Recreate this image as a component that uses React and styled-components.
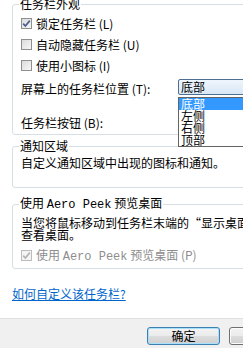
import React from "react";
import styled, { createGlobalStyle } from "styled-components";

const GlobalStyle = createGlobalStyle`
  html, body {
    margin: 0;
    padding: 0;
    overflow: hidden;
    background: #ffffff;
  }
`;

const Dialog = styled.div`
  width: 396px;
  height: 348px;
  display: flex;
  flex-direction: column;
  background: #ffffff;
  font-family: "Noto Sans CJK SC", "Liberation Sans", sans-serif;
  font-size: 12px;
  color: #000000;
`;

const Content = styled.div`
  padding: 0 12px;
  display: flex;
  flex-direction: column;
`;

const Group = styled.fieldset`
  margin: ${(p) => p.$mt}px 0 0;
  padding: ${(p) => p.$pad};
  border: 1px solid #d5dfe5;
  border-radius: 3px;
  min-width: 0;
  display: flex;
  flex-direction: column;
`;

const Legend = styled.legend`
  padding: 0 1px;
  margin-left: -2px;
  line-height: 16px;
  font-size: 12px;
`;

const Mono = styled.span`
  font-family: "Liberation Mono", monospace;
  font-size: 12px;
`;

const CheckRow = styled.div`
  height: ${(p) => p.$h || 21}px;
  margin-top: ${(p) => p.$mt || 0}px;
  display: flex;
  align-items: center;
  gap: 4px;
  white-space: nowrap;
  color: ${(p) => (p.$disabled ? "#8d8d8d" : "#000000")};
`;

const Box = styled.span`
  box-sizing: border-box;
  width: 11px;
  height: 11px;
  border: 1px solid ${(p) => (p.$disabled ? "#bcbcbc" : "#8e8f8f")};
  background: ${(p) =>
    p.$disabled
      ? "linear-gradient(#f4f4f4, #f4f4f4)"
      : "linear-gradient(135deg, #dcdcdc, #f6f6f6)"};
  display: flex;
  align-items: center;
  justify-content: center;
  flex-shrink: 0;
`;

const FieldRow = styled.div`
  height: 22px;
  margin-top: ${(p) => p.$mt}px;
  display: flex;
  align-items: ${(p) => (p.$top ? "flex-start" : "center")};
  white-space: nowrap;
`;

const FieldLabel = styled.span`
  width: 157px;
  line-height: 22px;
`;

const SelectWrap = styled.div`
  position: relative;
  margin-top: 1px;
`;

const Select = styled.div`
  box-sizing: border-box;
  width: 124px;
  height: 16px;
  border: 1px solid #4f6f92;
  border-radius: 2px;
  background: linear-gradient(#eef5fc, #d9e8f6);
  padding-left: 2px;
  line-height: 14px;
`;

const DropList = styled.div`
  position: absolute;
  top: 18px;
  left: 0;
  box-sizing: border-box;
  width: 124px;
  border: 1px solid #646464;
  background: #ffffff;
  z-index: 2;
`;

const DropItem = styled.div`
  height: 12px;
  line-height: 12px;
  padding-left: 2px;
  background: ${(p) => (p.$active ? "#3399ff" : "transparent")};
  color: ${(p) => (p.$active ? "#ffffff" : "#000000")};
`;

const Para = styled.div`
  line-height: ${(p) => p.$lh}px;
  white-space: nowrap;
`;

const Link = styled.a`
  margin-top: 17px;
  align-self: flex-start;
  line-height: 16px;
  color: #0066cc;
  text-decoration: underline;
`;

const Footer = styled.div`
  margin-top: 16px;
  flex: 1;
  border-top: 1px solid #dfdfdf;
  background: #f0f0f0;
  padding: 8px 12px 0;
  display: flex;
  justify-content: flex-end;
  align-items: flex-start;
  gap: 9px;
`;

const Button = styled.button`
  box-sizing: border-box;
  width: 73px;
  height: 18px;
  padding: 0;
  border: 1px solid ${(p) => (p.$primary ? "#3c7fb1" : "#707070")};
  border-radius: 3px;
  background: linear-gradient(#f3f3f3 0%, #ebebeb 50%, #dddddd 51%, #cfcfcf 100%);
  box-shadow: ${(p) => (p.$primary ? "inset 0 0 0 1px #a6e0fb" : "inset 0 0 0 1px #fcfcfc")};
  font-family: inherit;
  font-size: 12px;
  line-height: 16px;
  color: #000000;
`;

const Check = ({ checked, disabled }) => (
  <Box $disabled={disabled}>
    {checked && (
      <svg width="9" height="9" viewBox="0 0 9 9">
        <path
          d="M1.2 4.6 L3.4 7 L7.8 1.6"
          fill="none"
          stroke={disabled ? "#b4b4b4" : "#4b5f8f"}
          strokeWidth="1.7"
        />
      </svg>
    )}
  </Box>
);

const positions = ["底部", "左侧", "右侧", "顶部"];

export default function App() {
  return (
    <>
      <GlobalStyle />
      <Dialog lang="zh-CN">
        <Content>
          <Group $mt={-4} $pad="1px 8px 0">
            <Legend>任务栏外观</Legend>
            <CheckRow>
              <Check checked />
              <span>锁定任务栏 (L)</span>
            </CheckRow>
            <CheckRow>
              <Check />
              <span>自动隐藏任务栏 (U)</span>
            </CheckRow>
            <CheckRow>
              <Check />
              <span>使用小图标 (I)</span>
            </CheckRow>
            <FieldRow $mt={2} $top>
              <FieldLabel>屏幕上的任务栏位置 (T):</FieldLabel>
              <SelectWrap>
                <Select>底部</Select>
                <DropList>
                  {positions.map((p, i) => (
                    <DropItem key={p} $active={i === 0}>
                      {p}
                    </DropItem>
                  ))}
                </DropList>
              </SelectWrap>
            </FieldRow>
            <FieldRow $mt={12}>
              <FieldLabel>任务栏按钮 (B):</FieldLabel>
            </FieldRow>
          </Group>

          <Group $mt={3} $pad="1px 8px 16px">
            <Legend>通知区域</Legend>
            <Para $lh={16}>自定义通知区域中出现的图标和通知。</Para>
          </Group>

          <Group $mt={7} $pad="4px 8px 3px">
            <Legend>
              使用 <Mono>Aero Peek</Mono> 预览桌面
            </Legend>
            <Para $lh={12}>当您将鼠标移动到任务栏末端的“显示桌面”按钮时，会暂时</Para>
            <Para $lh={12}>查看桌面。</Para>
            <CheckRow $h={20} $mt={4} $disabled>
              <Check checked disabled />
              <span>
                使用 <Mono>Aero Peek</Mono> 预览桌面 (P)
              </span>
            </CheckRow>
          </Group>

          <Link href="#">如何自定义该任务栏?</Link>
        </Content>
        <Footer>
          <Button $primary>确定</Button>
          <Button>取消</Button>
          <Button>应用 (A)</Button>
        </Footer>
      </Dialog>
    </>
  );
}
